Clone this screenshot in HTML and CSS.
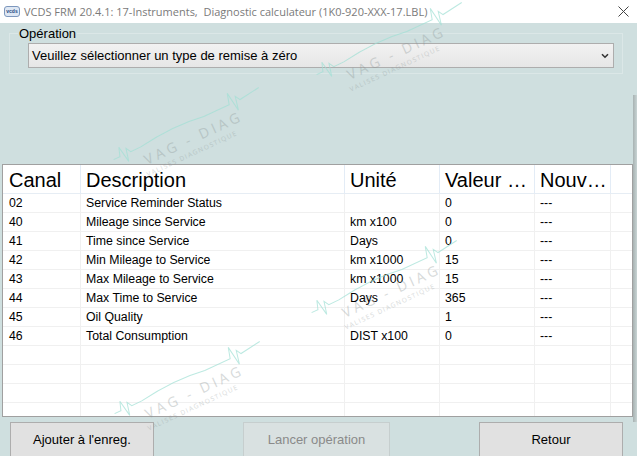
FILE: index.html
```html
<!DOCTYPE html>
<html lang="fr">
<head>
<meta charset="utf-8">
<title>VCDS</title>
<link rel="stylesheet" href="styles.css">
</head>
<body>
<div class="window">
  <header class="titlebar">
    <svg class="appicon" width="16" height="11" viewBox="0 0 16 11">
      <rect x="0.5" y="0.5" width="15" height="10" rx="2.5" fill="#dfe8f4" stroke="#7d97bd"/>
      <text x="8" y="7.4" font-size="5" text-anchor="middle" font-family="Liberation Sans" font-weight="bold" fill="#23457e">vcds</text>
    </svg>
    <span class="title">VCDS FRM 20.4.1: 17-Instruments,&nbsp; Diagnostic calculateur (1K0-920-XXX-17.LBL)</span>
    <svg class="close" width="11" height="11" viewBox="0 0 11 11">
      <path d="M0.5 0.5 L10.5 10.5 M10.5 0.5 L0.5 10.5" stroke="#444" stroke-width="1" fill="none"/>
    </svg>
  </header>

  <fieldset class="group">
    <legend class="group-label">Opération</legend>
    <div class="select">
      <span>Veuillez sélectionner un type de remise à zéro</span>
      <svg class="chevron" width="8" height="6" viewBox="0 0 8 6">
        <path d="M1 1.2 L4 4.2 L7 1.2" stroke="#333" stroke-width="1.6" fill="none"/>
      </svg>
    </div>
  </fieldset>

  <div class="list">
    <div class="hd c1">Canal</div>
    <div class="hd">Description</div>
    <div class="hd">Unité</div>
    <div class="hd">Valeur …</div>
    <div class="hd">Nouv…</div>
    <div class="hd last"></div>

    <div class="cell c1">02</div><div class="cell">Service Reminder Status</div><div class="cell"></div><div class="cell">0</div><div class="cell">---</div><div class="cell last"></div>
    <div class="cell c1">40</div><div class="cell">Mileage since Service</div><div class="cell">km x100</div><div class="cell">0</div><div class="cell">---</div><div class="cell last"></div>
    <div class="cell c1">41</div><div class="cell">Time since Service</div><div class="cell">Days</div><div class="cell">0</div><div class="cell">---</div><div class="cell last"></div>
    <div class="cell c1">42</div><div class="cell">Min Mileage to Service</div><div class="cell">km x1000</div><div class="cell">15</div><div class="cell">---</div><div class="cell last"></div>
    <div class="cell c1">43</div><div class="cell">Max Mileage to Service</div><div class="cell">km x1000</div><div class="cell">15</div><div class="cell">---</div><div class="cell last"></div>
    <div class="cell c1">44</div><div class="cell">Max Time to Service</div><div class="cell">Days</div><div class="cell">365</div><div class="cell">---</div><div class="cell last"></div>
    <div class="cell c1">45</div><div class="cell">Oil Quality</div><div class="cell"></div><div class="cell">1</div><div class="cell">---</div><div class="cell last"></div>
    <div class="cell c1">46</div><div class="cell">Total Consumption</div><div class="cell">DIST x100</div><div class="cell">0</div><div class="cell">---</div><div class="cell last"></div>
    <div class="cell c1"></div><div class="cell"></div><div class="cell"></div><div class="cell"></div><div class="cell"></div><div class="cell last"></div>
    <div class="cell c1"></div><div class="cell"></div><div class="cell"></div><div class="cell"></div><div class="cell"></div><div class="cell last"></div>
    <div class="cell c1"></div><div class="cell"></div><div class="cell"></div><div class="cell"></div><div class="cell"></div><div class="cell last"></div>
    <div class="cell c1"></div><div class="cell"></div><div class="cell"></div><div class="cell"></div><div class="cell"></div><div class="cell last"></div>
  </div>

  <div class="buttons">
    <button class="btn btn-add">Ajouter à l'enreg.</button>
    <button class="btn btn-run" disabled>Lancer opération</button>
    <button class="btn btn-back">Retour</button>
  </div>

  <div class="edge"></div>

  <svg class="watermarks" width="637" height="456" viewBox="0 0 637 456" aria-hidden="true">
    <g transform="translate(350,80) rotate(-25)">
      <path class="wm-beat" d="M-28 -19 L-21 -19 L-18 -28 L-15 -11 L-12 -24 L-9 -19 L2 -19 Q40 -25 72 -20 L100 -20 L103 -31 L106 -11 L109 -25 L112 -20 L134 -23"/>
      <text class="wm-text" x="0" y="0">VAG - DIAG</text>
      <text class="wm-sub" x="-4" y="11">VALISES DIAGNOSTIQUE</text>
    </g>
    <g transform="translate(147,165) rotate(-25)">
      <path class="wm-beat" d="M-28 -19 L-21 -19 L-18 -28 L-15 -11 L-12 -24 L-9 -19 L2 -19 Q40 -25 72 -20 L100 -20 L103 -31 L106 -11 L109 -25 L112 -20 L134 -23"/>
      <text class="wm-text" x="0" y="0">VAG - DIAG</text>
      <text class="wm-sub" x="-4" y="11">VALISES DIAGNOSTIQUE</text>
    </g>
    <g transform="translate(345,318) rotate(-25)">
      <path class="wm-beat" d="M-28 -19 L-21 -19 L-18 -28 L-15 -11 L-12 -24 L-9 -19 L2 -19 Q40 -25 72 -20 L100 -20 L103 -31 L106 -11 L109 -25 L112 -20 L134 -23"/>
      <text class="wm-text" x="0" y="0">VAG - DIAG</text>
      <text class="wm-sub" x="-4" y="11">VALISES DIAGNOSTIQUE</text>
    </g>
    <g transform="translate(148,419) rotate(-25)">
      <path class="wm-beat" d="M-28 -19 L-21 -19 L-18 -28 L-15 -11 L-12 -24 L-9 -19 L2 -19 Q40 -25 72 -20 L100 -20 L103 -31 L106 -11 L109 -25 L112 -20 L134 -23"/>
      <text class="wm-text" x="0" y="0">VAG - DIAG</text>
      <text class="wm-sub" x="-4" y="11">VALISES DIAGNOSTIQUE</text>
    </g>
  </svg>
</div>
</body>
</html>
```

FILE: styles.css
```css
html, body {
  margin: 0;
  padding: 0;
}

body {
  width: 637px;
  height: 456px;
  overflow: hidden;
  background: #cfdfdf;
  font-family: "Liberation Sans", Arial, sans-serif;
  color: #000;
}

.window {
  position: relative;
  width: 637px;
  height: 456px;
  overflow: hidden;
  display: flex;
  flex-direction: column;
}

/* Title bar */
.titlebar {
  flex: none;
  height: 23px;
  background: #fff;
  display: flex;
  align-items: center;
}

.appicon {
  flex: none;
  margin: 0 4px 0 4px;
}

.title {
  font-family: "Open Sans", "Noto Sans", sans-serif;
  font-size: 11px;
  color: #7a7a7a;
  white-space: nowrap;
}

.close {
  flex: none;
  margin-left: auto;
  margin-right: 8px;
}

/* Operation group */
.group {
  flex: none;
  margin: 3px 14px 0 9px;
  padding: 2px 0 5px 18px;
  border: 1px solid #dbe7e7;
  min-width: 0;
}

.group-label {
  font-size: 13px;
  line-height: 15px;
  padding: 0 1px;
  margin-left: -10px;
}

.select {
  width: 586px;
  height: 25px;
  box-sizing: border-box;
  border: 1px solid #adadad;
  background: linear-gradient(#f2f2f2, #e6e6e6);
  display: flex;
  align-items: center;
  padding-left: 3px;
  font-size: 13px;
}

.chevron {
  margin-left: auto;
  margin-right: 4px;
}

/* List view */
.list {
  flex: none;
  margin: 90px 0 0 2px;
  width: 631px;
  height: 253px;
  box-sizing: border-box;
  border: 1px solid #a0a0a0;
  background: #fff;
  overflow: hidden;
  display: grid;
  grid-template-columns: 78px 264px 95px 95px 76px 21px;
  grid-auto-rows: min-content;
  align-content: start;
}

.hd {
  height: 29px;
  box-sizing: border-box;
  border-right: 1px solid #e3ecf6;
  border-bottom: 1px solid #e6edf4;
  font-size: 20px;
  line-height: 26px;
  padding: 2px 0 0 5px;
  white-space: nowrap;
  overflow: hidden;
}

.cell {
  height: 19px;
  box-sizing: border-box;
  border-right: 1px solid #f0f0f0;
  border-bottom: 1px solid #f0f0f0;
  font-size: 12.3px;
  line-height: 18px;
  padding-left: 5px;
  white-space: nowrap;
  overflow: hidden;
}

.c1 {
  padding-left: 6px;
}

.last {
  border-right: none;
}

/* Buttons */
.buttons {
  flex: none;
  display: flex;
  justify-content: space-between;
  padding: 0 14px 0 10px;
  margin-top: 5px;
}

.btn {
  height: 36px;
  box-sizing: border-box;
  border: 1px solid #adadad;
  background: #e1e1e1;
  font-family: "Liberation Sans", Arial, sans-serif;
  font-size: 13px;
  color: #000;
  padding: 0 0 2px 0;
  margin: 0;
}

.btn-add { width: 144px; }
.btn-run { width: 147px; }
.btn-back { width: 144px; }

.btn:disabled {
  background: #d9e1e1;
  border-color: #c6cece;
  color: #8a8a8a;
}

/* Right edge shadow */
.edge {
  position: absolute;
  right: 0;
  top: 95px;
  width: 4px;
  height: 327px;
  background: linear-gradient(90deg, #a8b2b2, #c8d4d4);
}

/* Watermarks */
.watermarks {
  position: absolute;
  left: 0;
  top: 0;
  pointer-events: none;
}

.wm-beat {
  fill: none;
  stroke: #9fe0d4;
  stroke-width: 1;
  opacity: 0.7;
}

.wm-text {
  font-family: "Open Sans", sans-serif;
  font-size: 14px;
  letter-spacing: 3.5px;
  fill: #8c9696;
  opacity: 0.35;
}

.wm-sub {
  font-family: "Open Sans", sans-serif;
  font-size: 6.5px;
  letter-spacing: 1.3px;
  fill: #8c9696;
  opacity: 0.35;
}
```
